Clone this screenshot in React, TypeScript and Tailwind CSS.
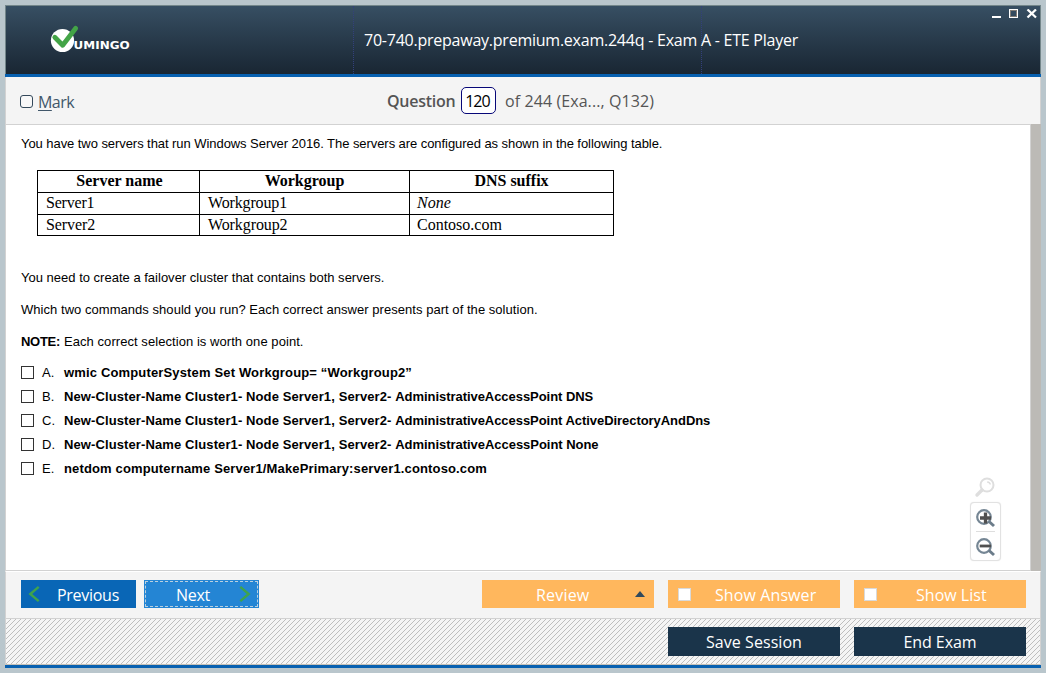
import type { ReactNode } from "react";

const clusterCommand = "New-Cluster-Name Cluster1- Node Server1, Server2- ";

const answers = [
  { letter: "A.", head: "wmic ComputerSystem Set Workgroup= “Workgroup2”", headSpacing: "tracking-[0.153px]", tail: "", tailSpacing: "" },
  { letter: "B.", head: clusterCommand, headSpacing: "tracking-[0.108px]", tail: "AdministrativeAccessPoint DNS", tailSpacing: "tracking-[-0.05px]" },
  { letter: "C.", head: clusterCommand, headSpacing: "tracking-[0.108px]", tail: "AdministrativeAccessPoint ActiveDirectoryAndDns", tailSpacing: "tracking-[-0.05px]" },
  { letter: "D.", head: clusterCommand, headSpacing: "tracking-[0.108px]", tail: "AdministrativeAccessPoint None", tailSpacing: "tracking-[-0.04px]" },
  { letter: "E.", head: "netdom computername Server1/MakePrimary:server1.contoso.com", headSpacing: "tracking-[0.14px]", tail: "", tailSpacing: "" },
];

function Logo() {
  return (
    <svg className="ml-[44px] mt-[18px] h-[30px] w-[84px]" viewBox="50 24 84 30">
      <circle cx="62.5" cy="40.5" r="11.6" fill="#fff" />
      <path d="M54.8 37.2 L62.7 45.3 L75.7 28.3" fill="none" stroke="#43a447" strokeWidth="4.8" strokeLinecap="round" strokeLinejoin="round" />
      <text x="73.6" y="49" fill="#fff" fontFamily="DejaVu Sans, sans-serif" fontWeight="bold" fontSize="9.6" textLength="56" lengthAdjust="spacingAndGlyphs">UMINGO</text>
    </svg>
  );
}

function Header() {
  return (
    <header className="relative flex h-[69px] shrink-0 border-x border-t border-[#73868a] bg-linear-to-b from-[#374f63] to-[#192633]">
      <div className="h-full w-[348px] border-r border-dotted border-[#33407c]">
        <Logo />
      </div>
      <div className="w-[348px] border-r border-dotted border-[#33407c]">
        <h1 className="pt-[22px] pl-[10px] text-base leading-6 tracking-[-0.238px] whitespace-nowrap text-white">
          70-740.prepaway.premium.exam.244q - Exam A - ETE Player
        </h1>
      </div>
      <svg className="absolute top-[3px] right-[2px] h-[10px] w-[46px]" viewBox="0 0 46 10" shapeRendering="crispEdges">
        <rect x="0" y="7" width="9" height="2" fill="#fff" />
        <rect x="17.5" y="0.5" width="8" height="8" fill="none" stroke="#fff" />
        <rect x="18.5" y="1.5" width="6" height="6" fill="none" stroke="#827c75" />
        <path d="M35.5 0.5 L44 8.5 M44 0.5 L35.5 8.5" stroke="#fff" strokeWidth="2.3" shapeRendering="auto" />
      </svg>
    </header>
  );
}

function Toolbar() {
  return (
    <div className="flex h-[48px] shrink-0 border-x border-b border-[#d2d2d2] bg-[#f4f4f4] text-base leading-6">
      <div className="flex w-[381px] pt-[13px] pl-[14px] text-[#41576a]">
        <span className="mt-[5px] mr-[5px] h-[13px] w-[13px] rounded-[3px] border border-[#34495b] bg-[#f8f8f8]" />
        <span className="tracking-[-0.55px]">
          <span className="underline underline-offset-[2px]">M</span>ark
        </span>
      </div>
      <div className="flex pt-[12px] whitespace-nowrap text-[#555]">
        <b className="w-[74px] font-semibold tracking-[-0.25px]">Question</b>
        <span className="-mt-[2px] h-[27px] w-[35px] rounded-[5px] border border-[#080878] bg-white pr-[2px] text-center leading-[27px] tracking-[-0.9px] text-black">120</span>
        <span className="ml-[9px] tracking-[0.088px]">of 244 (Exa..., Q132)</span>
      </div>
    </div>
  );
}

const cell = "border border-black py-0 pl-[8px] align-top";

function ServerTable() {
  return (
    <table className="mt-[18px] ml-[16px] w-[577px] table-fixed border-collapse font-['Liberation_Serif',serif] text-base leading-[20px] text-black">
      <colgroup>
        <col className="w-[162px]" />
        <col className="w-[210px]" />
        <col className="w-[204px]" />
      </colgroup>
      <tbody>
        <tr className="h-[22px] text-center font-bold">
          <td className="border border-black p-0 pl-[2px] align-top">Server name</td>
          <td className="border border-black p-0 align-top">Workgroup</td>
          <td className="border border-black p-0 align-top">DNS suffix</td>
        </tr>
        <tr className="h-[22px]">
          <td className={cell}><span className="tracking-[-0.2px]">Server1</span></td>
          <td className={cell}><span className="tracking-[-0.15px]">Workgroup1</span></td>
          <td className={cell}><i className="-ml-px">None</i></td>
        </tr>
        <tr className="h-[21px]">
          <td className={cell}><span className="tracking-[-0.1px]">Server2</span></td>
          <td className={cell}><span className="tracking-[-0.1px]">Workgroup2</span></td>
          <td className={cell}><span className="-ml-px">Contoso.com</span></td>
        </tr>
      </tbody>
    </table>
  );
}

function ZoomTools() {
  return (
    <div className="absolute top-[351px] left-[964px] flex w-[31px] flex-col items-center">
      <svg className="mr-[2px] mb-[4px] h-[22px] w-[22px]" viewBox="0 0 22 22" fill="none" stroke="#dedede">
        <circle cx="13" cy="9" r="6.5" strokeWidth="2" />
        <path d="M13.2 5.9 Q16 6.2 16.3 8.5" strokeWidth="1.5" />
        <path d="M8 14 L3 19" strokeWidth="3.4" strokeLinecap="round" />
      </svg>
      <div className="flex h-[59px] w-[31px] flex-col items-center rounded-[4px] border border-[#e2e2e2] bg-white shadow-[0_0_1px_#dddddd]">
        <svg className="mt-[4px] mr-[2px] h-[22px] w-[22px] shrink-0" viewBox="0 0 22 22" fill="none">
          <circle cx="10" cy="10" r="6.8" stroke="#758694" strokeWidth="2.2" />
          <path d="M15 14.5 L20 19" stroke="#6b7c8a" strokeWidth="3" />
          <path d="M6 11 H17 M11.5 5.5 V16.5" stroke="#505050" strokeWidth="3.3" />
        </svg>
        <span className="mt-[2px] h-px w-[19px] shrink-0 bg-[#dedede]" />
        <svg className="mt-[4px] mr-[2px] h-[22px] w-[22px] shrink-0" viewBox="0 0 22 22" fill="none">
          <circle cx="10" cy="10" r="6.8" stroke="#758694" strokeWidth="2.2" />
          <path d="M15 14.5 L20 19" stroke="#6b7c8a" strokeWidth="3" />
          <path d="M5.7 10 H17" stroke="#505050" strokeWidth="2.8" />
        </svg>
      </div>
    </div>
  );
}

function Content() {
  return (
    <main className="relative flex h-[446px] shrink-0 border-l border-[#d2d2d2]">
      <div className="w-[1025px] border-r border-b border-[#d2d2d2] bg-white pt-[11px] pl-[15px] font-['Liberation_Sans',sans-serif] text-[13px] leading-4 whitespace-nowrap text-black">
        <p className="tracking-[-0.062px]">You have two servers that run Windows Server 2016. The servers are configured as shown in the following table.</p>
        <ServerTable />
        <p className="mt-[34px] tracking-[0.006px]">You need to create a failover cluster that contains both servers.</p>
        <p className="mt-[16px] tracking-[0.042px]">Which two commands should you run? Each correct answer presents part of the solution.</p>
        <p className="mt-[16px] flex">
          <b className="w-[43px] tracking-[-0.288px]">NOTE:</b>
          <span className="tracking-[0.06px]">Each correct selection is worth one point.</span>
        </p>
        <ul className="mt-[11px]">
          {answers.map((a) => (
            <li key={a.letter} className="flex h-6 items-start">
              <span className="mt-[5px] h-[13px] w-[13px] border border-[#333] bg-white" />
              <span className="mt-[4px] ml-[8px] w-[22px]">{a.letter}</span>
              <b className="mt-[4px] whitespace-pre">
                <span className={a.headSpacing}>{a.head}</span>
                <span className={a.tailSpacing}>{a.tail}</span>
              </b>
            </li>
          ))}
        </ul>
      </div>
      <div className="-mt-px w-[10px] bg-[#bcbab6]" />
      <ZoomTools />
    </main>
  );
}

function OrangeButton({ children, label }: { children: ReactNode; label: ReactNode }) {
  return (
    <button className="flex h-[28px] w-[172px] items-center bg-[#ffb75d] text-white">
      {children}
      {label}
    </button>
  );
}

const box = "ml-[10px] h-[13px] w-[13px] border border-[#d9d9d9] bg-white";

function Footer() {
  return (
    <>
      <div className="flex h-[48px] shrink-0 border-x border-t border-b border-x-[#d2d2d2] border-t-white border-b-[#d2d2d2] bg-[#f4f4f4] pt-[8px] pl-[15px] text-base leading-6 whitespace-nowrap">
        <button className="flex h-[28px] w-[115px] items-center bg-[#0966b6] pl-[7px] text-white">
          <svg className="h-[18px] w-[12px]" viewBox="0 0 12 18" fill="none" stroke="#3fa34d" strokeWidth="2.4"><path d="M10.7 1.8 L2.3 9 L10.7 16.2" /></svg>
          <span className="mt-px ml-[17px] tracking-[-0.28px]">Previous</span>
        </button>
        <button className="ml-[8px] flex h-[28px] w-[115px] items-center bg-[#2485d4] p-px text-white">
          <span className="flex h-full w-full items-center border border-dashed border-[#bad0df] pl-[30px]">
            <span className="mt-px w-[63px] text-left tracking-[-0.277px]">Next</span>
            <svg className="h-[18px] w-[12px]" viewBox="0 0 12 18" fill="none" stroke="#3fa34d" strokeWidth="2.4"><path d="M1.3 1.8 L9.7 9 L1.3 16.2" /></svg>
          </span>
        </button>
        <div className="ml-[223px] flex gap-[14px]">
          <OrangeButton label={<svg className="ml-[44px] h-[6px] w-[10px]" viewBox="0 0 10 6"><path d="M0 6 L5 0 L10 6Z" fill="#30495c" /></svg>}>
            <span className="mt-px ml-[54px] w-[55px] text-left tracking-[0.2px]">Review</span>
          </OrangeButton>
          <OrangeButton label={<span className="mt-px ml-[24px] tracking-[0.1px]">Show Answer</span>}>
            <span className={box} />
          </OrangeButton>
          <OrangeButton label={<span className="mt-px ml-[39px] tracking-[0.02px]">Show List</span>}>
            <span className={box} />
          </OrangeButton>
        </div>
      </div>
      <div className="relative h-[46px] shrink-0 border-x border-b border-x-[#d2d2d2] border-b-[#c4c0b8] bg-[#f5f5f5]">
        <svg className="absolute inset-0 h-full w-full" shapeRendering="crispEdges">
          <defs>
            <pattern id="hatch" width="5" height="5" patternUnits="userSpaceOnUse">
              <path d="M4 0h1v1h-1z M3 1h1v1h-1z M2 2h1v1h-1z M1 3h1v1h-1z M0 4h1v1h-1z" fill="#bebebe" />
            </pattern>
          </defs>
          <rect width="100%" height="100%" fill="url(#hatch)" />
        </svg>
        <div className="relative flex justify-end gap-[14px] pt-[8px] pr-[14px] text-base leading-6 text-white">
          <button className="h-[29px] w-[172px] bg-[#1a344a] pt-px tracking-[0.06px]">Save Session</button>
          <button className="h-[29px] w-[172px] bg-[#1a344a] pt-px tracking-[-0.077px]">End Exam</button>
        </div>
      </div>
      <div className="h-[3px] shrink-0 bg-[#0760b0]" />
    </>
  );
}

export default function App() {
  return (
    <div className="h-[673px] w-[1046px] overflow-hidden bg-[#b9c6cc] pt-[5px] pl-[5px] font-['Open_Sans',sans-serif]">
      <div className="flex h-[663px] w-[1036px] flex-col">
        <Header />
        <div className="h-[3px] shrink-0 bg-[#0760b0]" />
        <Toolbar />
        <Content />
        <Footer />
      </div>
    </div>
  );
}
